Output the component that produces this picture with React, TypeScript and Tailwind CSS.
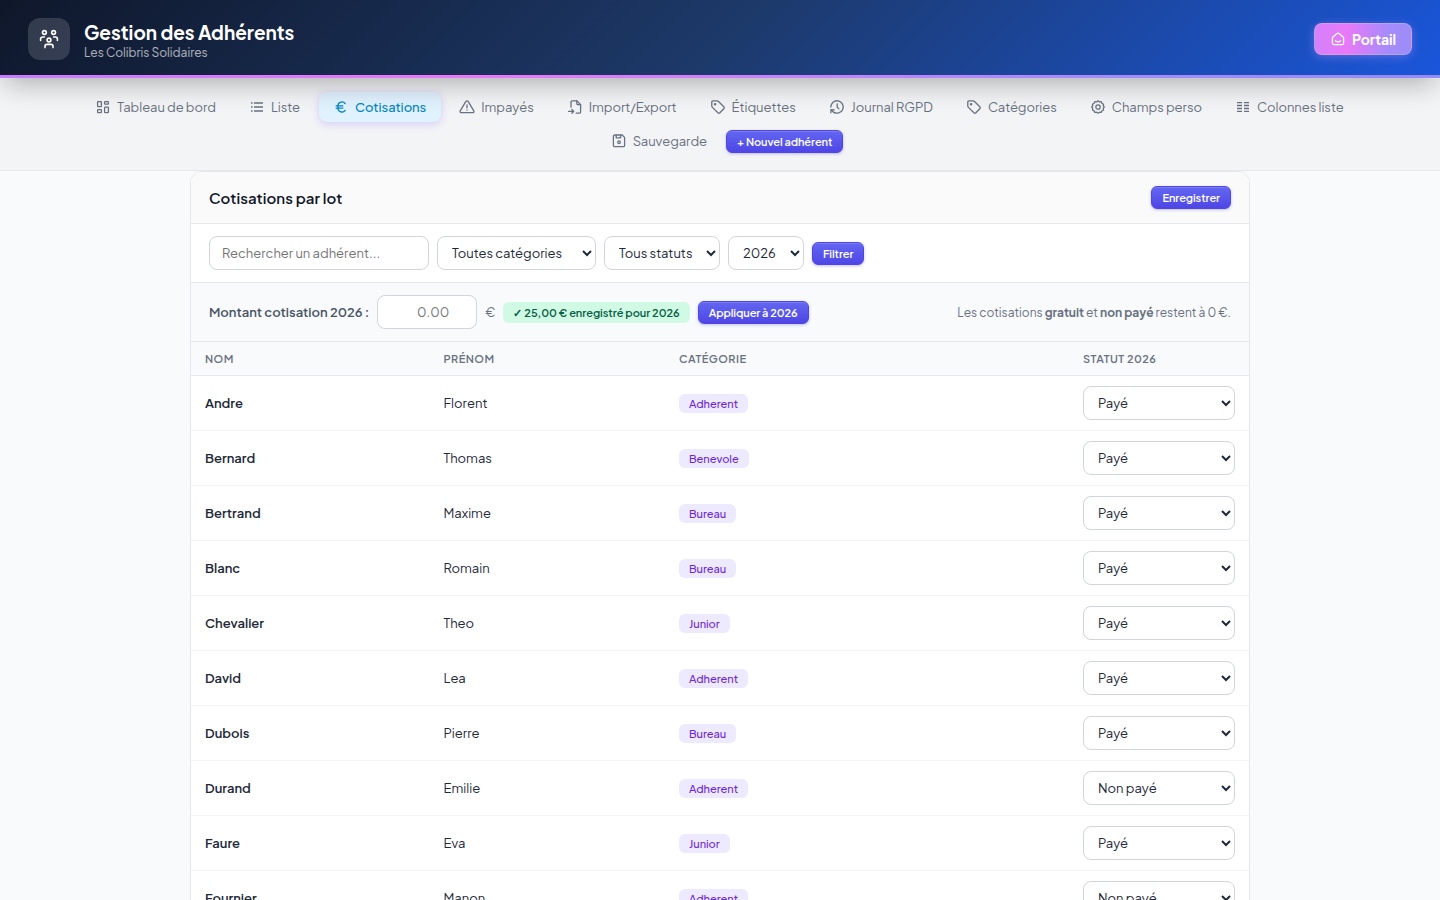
import React, { useState } from "react";

type IconProps = { className?: string };

interface Member {
  nom: string;
  prenom: string;
  categorie: string;
  statut: string;
}

const MEMBERS: Member[] = [
  { nom: "Andre", prenom: "Florent", categorie: "Adherent", statut: "Payé" },
  { nom: "Bernard", prenom: "Thomas", categorie: "Benevole", statut: "Payé" },
  { nom: "Bertrand", prenom: "Maxime", categorie: "Bureau", statut: "Payé" },
  { nom: "Blanc", prenom: "Romain", categorie: "Bureau", statut: "Payé" },
  { nom: "Chevalier", prenom: "Theo", categorie: "Junior", statut: "Payé" },
  { nom: "David", prenom: "Lea", categorie: "Adherent", statut: "Payé" },
  { nom: "Dubois", prenom: "Pierre", categorie: "Bureau", statut: "Payé" },
  { nom: "Durand", prenom: "Emilie", categorie: "Adherent", statut: "Non payé" },
  { nom: "Faure", prenom: "Eva", categorie: "Junior", statut: "Payé" },
  { nom: "Fournier", prenom: "Manon", categorie: "Adherent", statut: "Non payé" },
];

function Glyph({ children, className = "size-3.5" }: IconProps & { children: React.ReactNode }) {
  return (
    <svg
      viewBox="0 0 14 14"
      className={`shrink-0 overflow-visible ${className}`}
      fill="none"
      stroke="currentColor"
      strokeWidth="1.3"
      strokeLinecap="round"
      strokeLinejoin="round"
    >
      {children}
    </svg>
  );
}

const DashboardIcon = () => (
  <Glyph>
    <rect x="1.6" y="1.6" width="3.8" height="5" rx="0.6" />
    <rect x="1.6" y="9.6" width="3.8" height="3" rx="0.6" />
    <rect x="8.6" y="1.6" width="3.8" height="2.6" rx="0.6" />
    <rect x="8.6" y="7.2" width="3.8" height="5.4" rx="0.6" />
  </Glyph>
);

const ListIcon = () => (
  <Glyph>
    <path d="M4 3h9M4 7h9M4 11h9M1 3h1.6M1 7h1.6M1 11h1.6" strokeLinecap="butt" />
  </Glyph>
);

const EuroIcon = () => (
  <Glyph>
    <path d="M11.2 3.6A4 4 0 0 0 4.1 7a4 4 0 0 0 7.1 3.4M2.2 5.9h6.6M2.2 8.1h6.6" />
  </Glyph>
);

const AlertIcon = () => (
  <Glyph>
    <path d="M5.9 1.4a1.3 1.3 0 0 1 2.2 0l5.7 9.5a1.2 1.2 0 0 1-1 1.8H1.2a1.2 1.2 0 0 1-1-1.8z" />
    <path d="M7 4.8v3M7 10v.2" />
  </Glyph>
);

const ImportIcon = () => (
  <Glyph>
    <path d="M3 7.2V2A1.2 1.2 0 0 1 4.2.8h4.6l3.8 3.8V12a1.2 1.2 0 0 1-1.2 1.2H8.2" />
    <path d="M8.8.8v2.6A1.2 1.2 0 0 0 10 4.6h2.6M.6 11.4h5M3.9 9.5l1.9 1.9-1.9 1.9" />
  </Glyph>
);

const TagIcon = () => (
  <Glyph>
    <path d="M.8 1.9a1 1 0 0 1 1-1h4.3a2 2 0 0 1 1.4.6l5.3 5.2a1.4 1.4 0 0 1 0 2l-3.9 4a1.4 1.4 0 0 1-2 0L1.4 7.4A2 2 0 0 1 .8 6z" />
    <circle cx="4.1" cy="4.2" r="0.6" />
  </Glyph>
);

const HistoryIcon = () => (
  <Glyph>
    <path d="M.8 7a6.2 6.2 0 1 1 2.7 5.1" />
    <path d="M.8 12.8l.3-3.2 3.2.2M7.2 4v3.2l1.7 1.7M.9 9.6l2.5 2.5" />
  </Glyph>
);

const GearIcon = () => (
  <Glyph>
    <path d="M7 .8l1.4 1.1 1.8-.2.7 1.6 1.6.9-.2 1.7L13.3 7l-1 1.2.2 1.8-1.6.8-.7 1.6-1.8-.2L7 13.2l-1.4-1-1.8.2-.7-1.6-1.6-.8.2-1.8L.7 7l1-1.1-.2-1.7 1.6-.9.7-1.6 1.8.2z" />
    <circle cx="7" cy="7" r="2.2" />
  </Glyph>
);

const ColumnsIcon = () => (
  <Glyph>
    <path
      d="M1 2.6h5M1 5.5h5M1 8.5h5M1 11.4h5M8 2.6h5M8 5.5h5M8 8.5h5M8 11.4h5"
      strokeLinecap="butt"
      strokeWidth="1.4"
    />
  </Glyph>
);

const SaveIcon = () => (
  <Glyph>
    <path d="M1.4 2.2A1.2 1.2 0 0 1 2.6 1h7.6l2.4 2.4v8a1.2 1.2 0 0 1-1.2 1.2H2.6a1.2 1.2 0 0 1-1.2-1.2z" />
    <path d="M4.2 1.2v2.6h4.4V1.2" />
    <circle cx="7" cy="8.2" r="1.3" />
  </Glyph>
);

const HomeIcon = () => (
  <Glyph>
    <path d="M1.4 5.6L6 1.6a1.6 1.6 0 0 1 2 0l4.6 4V11a1.6 1.6 0 0 1-1.6 1.6H3A1.6 1.6 0 0 1 1.4 11z" />
    <path d="M4.4 8.8c1.4 1.1 3.8 1.1 5.2 0" />
  </Glyph>
);

const GroupIcon = () => (
  <svg viewBox="0 0 20 20" className="size-5" fill="none" stroke="currentColor" strokeWidth="1.6" strokeLinecap="round">
    <circle cx="5.4" cy="3.5" r="1.9" />
    <circle cx="14.6" cy="3.5" r="1.9" />
    <circle cx="10" cy="11" r="1.9" />
    <path d="M1.6 11.4V10a2 2 0 0 1 2-2h1.8M18.4 11.4V10a2 2 0 0 0-2-2h-1.8M6 18.6v-1.2a2 2 0 0 1 2-2h4a2 2 0 0 1 2 2v1.2" />
  </svg>
);

const NAV = [
  { label: "Tableau de bord", icon: DashboardIcon },
  { label: "Liste", icon: ListIcon },
  { label: "Cotisations", icon: EuroIcon },
  { label: "Impayés", icon: AlertIcon },
  { label: "Import/Export", icon: ImportIcon },
  { label: "Étiquettes", icon: TagIcon },
  { label: "Journal RGPD", icon: HistoryIcon },
  { label: "Catégories", icon: TagIcon },
  { label: "Champs perso", icon: GearIcon },
  { label: "Colonnes liste", icon: ColumnsIcon },
  { label: "Sauvegarde", icon: SaveIcon },
];

function SmallButton({ children, className = "pt-px" }: { children: React.ReactNode; className?: string }) {
  return (
    <button
      type="button"
      className={`h-[23px] shrink-0 cursor-pointer whitespace-nowrap rounded-md border border-[#4f46e5] bg-linear-to-b from-[#6366f1] to-[#4f46e5] px-2.5 text-[11px] font-semibold leading-none tracking-[-0.08px] text-white shadow-[0_1px_3px_rgba(79,70,229,0.35),inset_0_1px_0_rgba(255,255,255,0.15)] ${className}`}
    >
      {children}
    </button>
  );
}

const fieldClass =
  "h-[34px] rounded-lg border border-[#d1d5db] bg-white text-[13px] text-gray-800 focus:outline-none focus:border-indigo-500";

function Select({ options, className }: { options: string[]; className: string }) {
  return (
    <select className={`${fieldClass} px-2.5 ${className}`}>
      {options.map((o) => (
        <option key={o}>{o}</option>
      ))}
    </select>
  );
}

export default function App() {
  const [active, setActive] = useState("Cotisations");

  return (
    <div className="h-screen overflow-hidden bg-[#f8fafc] font-['Plus_Jakarta_Sans',sans-serif] text-gray-800">
      {/* Header */}
      <header className="relative z-10 shadow-[0_10px_28px_-5px_rgba(0,0,0,0.3)]">
        <div className="flex h-[75px] items-center justify-between bg-[linear-gradient(135deg,#0f172a_0%,#1d3969_50%,#1a56db_100%)] px-7 pt-[3px]">
          <div className="flex items-center gap-3.5">
            <div className="flex size-[42px] items-center justify-center rounded-xl bg-white/15 text-white">
              <GroupIcon />
            </div>
            <div className="pt-0.5">
              <h1 className="text-[19px] font-bold leading-6 text-white">Gestion des Adhérents</h1>
              <p className="pt-px text-[12px] leading-4 text-white/65">Les Colibris Solidaires</p>
            </div>
          </div>
          <button
            type="button"
            className="flex h-8 cursor-pointer items-center gap-[7px] rounded-lg border border-white/20 bg-linear-[90deg,#d580fa,#e879f9_33%,#a78bfa_75%,#9b8df8] pr-[15px] pl-4 text-[14px] font-bold tracking-[-0.05px] text-white shadow-[0_2px_10px_rgba(167,139,250,0.45)]"
          >
            <HomeIcon />
            Portail
          </button>
        </div>
        <div className="h-[3px] bg-linear-[90deg,#c77dfd,#e879f9_33%,#a78bfa_75%,#958bf8]" />
      </header>

      {/* Navigation */}
      <nav className="flex flex-wrap items-center justify-center gap-1 border-b border-gray-200 bg-gray-100 px-7 pt-3.5 pb-3.5">
        {NAV.map(({ label, icon: Icon }) => (
          <button
            key={label}
            type="button"
            onClick={() => setActive(label)}
            className={`flex h-[30px] cursor-pointer items-center gap-[7px] whitespace-nowrap rounded-lg px-[15px] text-[13px] tracking-[-0.03px] ${
              active === label
                ? "bg-[#e0f2fe] font-medium text-[#0284c7] shadow-[0_2px_8px_rgba(99,60,255,0.22)]"
                : "text-gray-500"
            }`}
          >
            <Icon />
            <span className="pt-px">{label}</span>
          </button>
        ))}
        <SmallButton>+ Nouvel adhérent</SmallButton>
      </nav>

      {/* Card */}
      <main className="mx-auto w-[1060px] overflow-hidden rounded-xl border border-gray-200 bg-white">
        <div className="flex h-[52px] items-center justify-between border-b border-gray-200 bg-[#fafafa] px-[18px]">
          <h2 className="pt-0.5 text-[15px] font-semibold tracking-[0.08px] text-gray-900">Cotisations par lot</h2>
          <SmallButton className="pt-0">Enregistrer</SmallButton>
        </div>

        <div className="flex h-[59px] items-center gap-2 border-b border-gray-200 px-[18px]">
          <input
            type="text"
            placeholder="Rechercher un adhérent..."
            className={`${fieldClass} w-[220px] px-3 placeholder:text-[#757575]`}
          />
          <Select options={["Toutes catégories"]} className="w-[159px]" />
          <Select options={["Tous statuts"]} className="w-[116px]" />
          <Select options={["2026"]} className="w-[76px]" />
          <SmallButton>Filtrer</SmallButton>
        </div>

        <div className="flex h-[59px] items-center gap-2 border-b border-gray-200 bg-[#f8fafc] px-[18px]">
          <label className="whitespace-nowrap pt-px text-[13px] font-semibold text-gray-600">
            Montant cotisation 2026 :
          </label>
          <input
            type="number"
            placeholder="0.00"
            className={`${fieldClass} w-[100px] px-3 text-right placeholder:text-[#757575]`}
          />
          <span className="pt-px text-[13px] text-gray-500">€</span>
          <span className="flex h-[21px] items-center whitespace-nowrap rounded-md bg-[#d1fae5] px-2.5 pt-0.5 text-[11px] font-semibold tracking-[-0.03px] text-[#065f46]">
            ✓ 25,00 € enregistré pour 2026
          </span>
          <SmallButton>Appliquer à 2026</SmallButton>
          <p className="ml-auto whitespace-nowrap pt-px text-[12px] text-gray-500">
            Les cotisations <strong>gratuit</strong> et <strong>non payé</strong> restent à 0 €.
          </p>
        </div>

        <table className="w-full table-fixed border-separate border-spacing-0 text-left text-[13px]">
          <thead>
            <tr className="bg-[#f8fafc] text-[11px] tracking-[0.04em] text-gray-500">
              <th className="h-[34px] w-[238.5px] border-b border-gray-200 px-3.5 pt-0.5 font-semibold">NOM</th>
              <th className="w-[235.5px] border-b border-gray-200 px-3.5 pt-0.5 font-semibold">PRÉNOM</th>
              <th className="border-b border-gray-200 px-3.5 pt-0.5 font-semibold">CATÉGORIE</th>
              <th className="w-[180px] border-b border-gray-200 px-3.5 pt-0.5 font-semibold">STATUT 2026</th>
            </tr>
          </thead>
          <tbody>
            {MEMBERS.map((m) => (
              <tr key={m.nom}>
                <td className="h-[55px] border-b border-gray-100 px-3.5 pt-0.5 font-semibold">{m.nom}</td>
                <td className="border-b border-gray-100 px-3.5 pt-0.5">{m.prenom}</td>
                <td className="border-b border-gray-100 px-3.5">
                  <span className="inline-flex h-[19px] items-center rounded-md bg-[#ede9fe] px-2.5 pt-px align-middle text-[11px] font-medium text-[#6d28d9]">
                    {m.categorie}
                  </span>
                </td>
                <td className="border-b border-gray-100 px-3.5">
                  <Select options={[m.statut]} className="block w-full" />
                </td>
              </tr>
            ))}
          </tbody>
        </table>
      </main>
    </div>
  );
}
